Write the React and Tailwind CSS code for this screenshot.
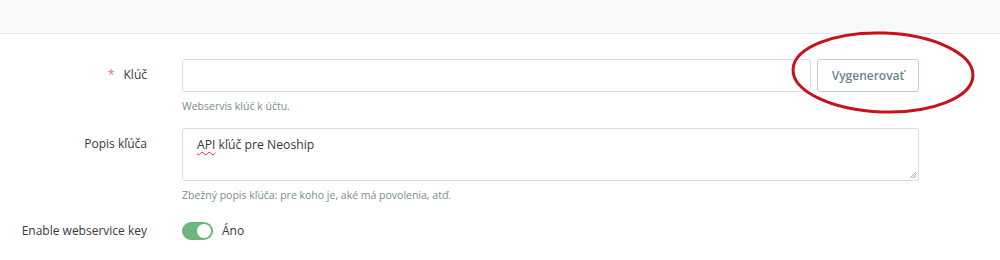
import React from "react";

const font = { fontFamily: "'Open Sans', 'DejaVu Sans', sans-serif" };

function Label({ children, required }) {
  return (
    <div className="flex justify-end items-center h-[32px] text-[12px] text-[#363a41]">
      {required && <span className="text-[#e57373] mr-[9px] text-[12px]">*</span>}
      {children}
    </div>
  );
}

function Help({ children }) {
  return <p className="text-[10.5px] text-[#7a8c93] mt-[6px] leading-[16px]">{children}</p>;
}

export default function App() {
  return (
    <div className="relative w-[1000px] h-[260px] bg-white overflow-hidden" style={font}>
      <div className="h-[34px] bg-[#f8f9fa] border-b border-[#e4e8ea]" />

      <div className="grid grid-cols-[147px_737px] gap-x-[35px] pt-[25px]">
        {/* key */}
        <Label required>Klúč</Label>
        <div>
          <div className="flex gap-[6px]">
            <div className="flex-1 h-[33px] rounded-[3px] border border-[#d6e0e3] bg-white" />
            <button className="w-[102px] h-[33px] rounded-[3px] border border-[#bbcdd2] bg-white text-[12px] text-[#6c868e] font-semibold">
              Vygenerovať
            </button>
          </div>
          <Help>Webservis klúč k účtu.</Help>
        </div>

        {/* description */}
        <div className="mt-[14px]">
          <div className="flex justify-end items-center h-[32px] text-[12px] text-[#363a41]">Popis kľúča</div>
        </div>
        <div className="mt-[14px]">
          <div className="relative h-[53px] rounded-[3px] border border-[#d6e0e3] bg-white px-[14px] pt-[7px] text-[12.2px] text-[#363a41]">
            <span className="underline decoration-wavy decoration-[#e03030] decoration-1 underline-offset-[2px]">API</span> kľúč pre Neoship
            <svg className="absolute right-[1px] bottom-[1px]" width="9" height="9" viewBox="0 0 9 9">
              <path d="M8 2 L2 8 M8 4 L4 8 M8 6 L6 8" stroke="#9aa5a9" strokeWidth="0.8" />
            </svg>
          </div>
          <Help>Zbežný popis kľúča: pre koho je, aké má povolenia, atď.</Help>
        </div>

        {/* enable */}
        <div className="mt-[18px]">
          <div className="flex justify-end items-center h-[20px] text-[12px] text-[#363a41]">Enable webservice key</div>
        </div>
        <div className="mt-[18px] flex items-center gap-[9px]">
          <div className="w-[31px] h-[18px] rounded-full bg-[#6fb57e] flex items-center justify-end pr-[2px]">
            <div className="w-[14px] h-[14px] rounded-full bg-white" />
          </div>
          <span className="text-[12px] text-[#363a41]">Áno</span>
        </div>
      </div>

      <svg className="absolute left-[788px] top-[29px] pointer-events-none" width="190" height="87" viewBox="0 0 190 87">
        <ellipse cx="95" cy="43.5" rx="90" ry="39.5" fill="none" stroke="#c8111b" strokeWidth="3" transform="rotate(2 95 43.5)" />
      </svg>
    </div>
  );
}
